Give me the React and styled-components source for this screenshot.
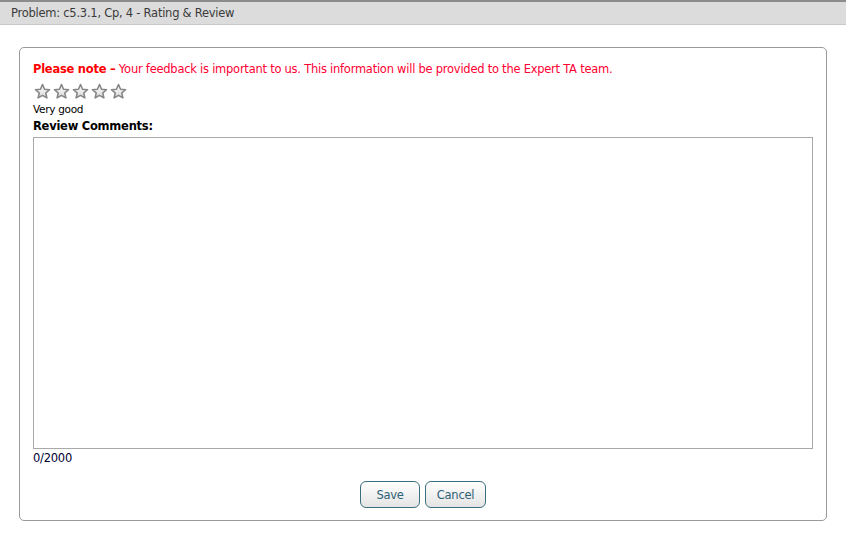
import styled, { createGlobalStyle } from "styled-components";

const GlobalStyle = createGlobalStyle`
  body {
    margin: 0;
    background: #fff;
    font-family: "DejaVu Sans", Verdana, sans-serif;
  }
`;

const Page = styled.div`
  width: 846px;
  height: 534px;
  border-top: 2px solid #8c8c8c;
  box-sizing: border-box;
`;

const Header = styled.div`
  height: 22px;
  background: #dcdcdc;
  border-bottom: 1px solid #c9c9c9;
  padding-left: 11px;
  font-size: 11.5px;
  letter-spacing: -0.25px;
  color: #3a3a3a;
  display: flex;
  align-items: center;
`;

const Body = styled.div`
  padding: 22px 19px 0 19px;
`;

const Card = styled.div`
  border: 1px solid #9a9a9a;
  border-radius: 5px;
  height: 474px;
  box-sizing: border-box;
  padding: 14px 13px 0 13px;
  display: flex;
  flex-direction: column;
`;

const Note = styled.div`
  font-size: 11.5px;
  letter-spacing: -0.25px;
  color: #ff0033;
  line-height: 14px;
`;

const NoteLabel = styled.span`
  font-weight: bold;
  color: #ff0000;
`;

const Stars = styled.div`
  display: flex;
  gap: 2px;
  margin-top: 7px;
  margin-left: 1px;
`;

const Rating = styled.div`
  font-size: 10.5px;
  letter-spacing: -0.3px;
  color: #000;
  margin-top: 3px;
  line-height: 12px;
`;

const Label = styled.div`
  font-size: 11.5px;
  letter-spacing: -0.25px;
  font-weight: bold;
  color: #000;
  margin-top: 4px;
  line-height: 14px;
`;

const Comments = styled.textarea`
  margin-top: 4px;
  width: 780px;
  height: 312px;
  box-sizing: border-box;
  border: 1px solid #a9a9a9;
  resize: none;
  outline: none;
  font-family: inherit;
`;

const Counter = styled.div`
  font-size: 11.5px;
  letter-spacing: -0.25px;
  color: #000033;
  line-height: 14px;
  margin-top: 2px;
`;

const Actions = styled.div`
  display: flex;
  justify-content: center;
  gap: 5px;
  margin-top: 16px;
`;

const Button = styled.button`
  width: ${(p) => p.w}px;
  height: 27px;
  border: 1px solid #3c6f80;
  border-radius: 6px;
  background: linear-gradient(#ffffff, #e4e4e4);
  color: #2d6176;
  font-family: inherit;
  font-size: 11.5px;
  letter-spacing: -0.25px;
  padding: 0;
`;

const Star = () => (
  <svg width="17" height="17" viewBox="0 0 24 24">
    <defs>
      <linearGradient id="starFill" x1="0" y1="0" x2="0" y2="1">
        <stop offset="0" stopColor="#ffffff" />
        <stop offset="1" stopColor="#d8d8d8" />
      </linearGradient>
    </defs>
    <path
      d="M12 2.2l2.9 6.6 7.1.6-5.4 4.7 1.6 7-6.2-3.7-6.2 3.7 1.6-7L2 9.4l7.1-.6z"
      fill="url(#starFill)"
      stroke="#858585"
      strokeWidth="2.2"
      strokeLinejoin="round"
    />
  </svg>
);

export default function App() {
  return (
    <>
      <GlobalStyle />
      <Page>
        <Header>Problem: c5.3.1, Cp, 4 - Rating &amp; Review</Header>
        <Body>
          <Card>
            <Note>
              <NoteLabel>Please note –</NoteLabel> Your feedback is important to
              us. This information will be provided to the Expert TA team.
            </Note>
            <Stars>
              {[0, 1, 2, 3, 4].map((i) => (
                <Star key={i} />
              ))}
            </Stars>
            <Rating>Very good</Rating>
            <Label>Review Comments:</Label>
            <Comments />
            <Counter>0/2000</Counter>
            <Actions>
              <Button w={60}>Save</Button>
              <Button w={61}>Cancel</Button>
            </Actions>
          </Card>
        </Body>
      </Page>
    </>
  );
}
